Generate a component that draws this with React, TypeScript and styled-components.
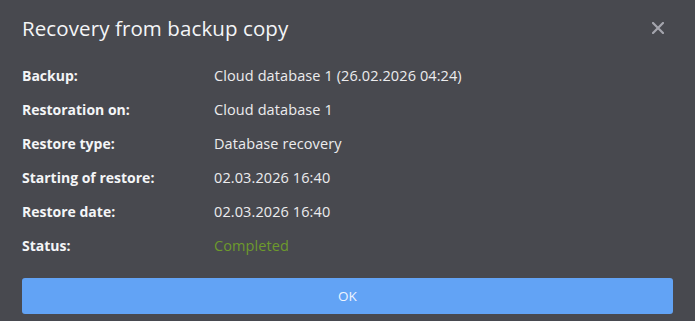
import styled, { createGlobalStyle } from 'styled-components';

const GlobalStyle = createGlobalStyle`
  html, body {
    margin: 0;
    padding: 0;
    background: #48494f;
  }
  body {
    font-family: "Open Sans", "Liberation Sans", sans-serif;
  }
`;

const Dialog = styled.div`
  width: 695px;
  height: 321px;
  box-sizing: border-box;
  padding: 0 22px;
  background: #48494f;
  color: #f2f2f2;
  display: flex;
  flex-direction: column;
`;

const Header = styled.div`
  height: 56px;
  display: flex;
  align-items: center;
  justify-content: space-between;
`;

const Title = styled.h1`
  margin: 0;
  font-size: 20.5px;
  font-weight: 400;
  color: #f4f5f7;
  letter-spacing: 0.1px;
`;

const CloseButton = styled.button`
  border: none;
  background: none;
  padding: 0;
  margin-right: 8px;
  width: 14px;
  height: 14px;
  display: flex;
  align-items: center;
  justify-content: center;
  cursor: pointer;
`;

const Rows = styled.div`
  display: flex;
  flex-direction: column;
  margin-top: 2px;
`;

const Row = styled.div`
  display: grid;
  grid-template-columns: 192px 1fr;
  height: 34px;
  align-items: center;
  font-size: 14px;
`;

const Label = styled.span`
  font-weight: 700;
  color: #f4f5f7;
`;

const Value = styled.span<{ $color?: string }>`
  font-size: 14.5px;
  letter-spacing: 0.1px;
  color: ${(p) => p.$color || '#ececee'};
`;

const OkButton = styled.button`
  margin-top: 16px;
  height: 36px;
  width: 100%;
  border: none;
  border-radius: 3px;
  background: #62a3f5;
  color: #eef4ff;
  font-family: "Open Sans", "Liberation Sans", sans-serif;
  font-size: 13.5px;
  cursor: pointer;
`;

const rows: { label: string; value: string; color?: string }[] = [
  { label: 'Backup:', value: 'Cloud database 1 (26.02.2026 04:24)' },
  { label: 'Restoration on:', value: 'Cloud database 1' },
  { label: 'Restore type:', value: 'Database recovery' },
  { label: 'Starting of restore:', value: '02.03.2026 16:40' },
  { label: 'Restore date:', value: '02.03.2026 16:40' },
  { label: 'Status:', value: 'Completed', color: '#6d9a2c' },
];

export default function App() {
  return (
    <>
      <GlobalStyle />
      <Dialog>
        <Header>
          <Title>Recovery from backup copy</Title>
          <CloseButton aria-label="Close">
            <svg width="12" height="12" viewBox="0 0 12 12">
              <path d="M1 1L11 11M11 1L1 11" stroke="#a4a5ad" strokeWidth="2.2" strokeLinecap="square" />
            </svg>
          </CloseButton>
        </Header>
        <Rows>
          {rows.map((r) => (
            <Row key={r.label}>
              <Label>{r.label}</Label>
              <Value $color={r.color}>{r.value}</Value>
            </Row>
          ))}
        </Rows>
        <OkButton>OK</OkButton>
      </Dialog>
    </>
  );
}
